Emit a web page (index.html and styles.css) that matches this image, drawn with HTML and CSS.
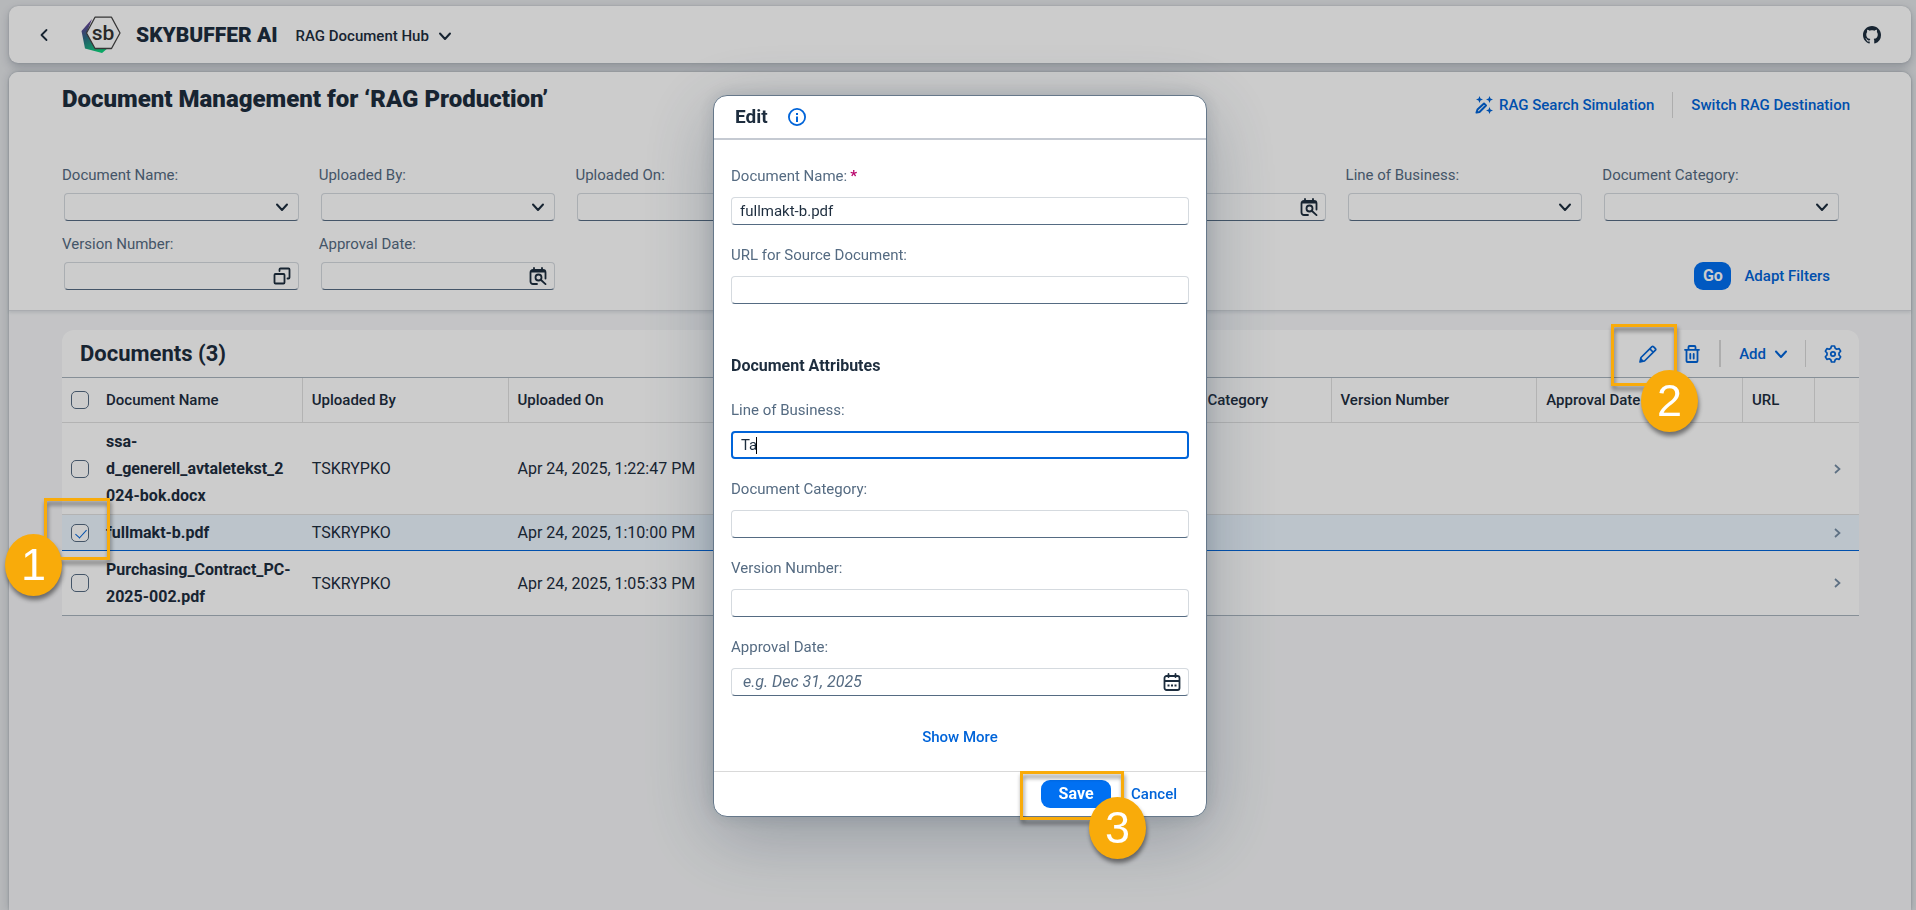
FILE: index.html
```html
<!DOCTYPE html>
<html lang="en">
<head>
<meta charset="utf-8">
<title>RAG Document Hub</title>
<link rel="stylesheet" href="styles.css">
</head>
<body>
<svg class="defs" aria-hidden="true">
  <symbol id="i-down" viewBox="0 0 18 18"><path d="M4 6.500 9 12l5-5.500" fill="none" stroke="currentColor" stroke-width="2" stroke-linecap="round" stroke-linejoin="round"/></symbol>
  <symbol id="i-left" viewBox="0 0 18 18"><path d="M11.500 4 6.500 9l5 5" fill="none" stroke="currentColor" stroke-width="1.800" stroke-linecap="round" stroke-linejoin="round"/></symbol>
  <symbol id="i-right" viewBox="0 0 18 18"><path d="M7 5l4.500 4L7 13" fill="none" stroke="currentColor" stroke-width="1.700"/></symbol>
  <symbol id="i-calsearch" viewBox="0 0 18 18"><g fill="none" stroke="currentColor" stroke-width="1.800" stroke-linecap="round" stroke-linejoin="round"><path d="M8 17H4a2.500 2.500 0 0 1-2.500-2.500V5.500A2.500 2.500 0 0 1 4 3h10a2.500 2.500 0 0 1 2.500 2.500v6M2 4.500h14M5 1v3M13 1v3"/><circle cx="9.500" cy="10.500" r="3"/><path d="M12 13l4.500 4.200"/></g></symbol>
  <symbol id="i-cal" viewBox="0 0 18 18"><g fill="none" stroke="currentColor" stroke-width="1.800" stroke-linecap="round"><rect x="1.500" y="3" width="15" height="14" rx="2"/><path d="M5.500 1v3M12.500 1v3M2 8h14"/></g><path d="M4.500 11.500h2v2h-2zM8 11.500h2v2H8zM11.500 11.500h2v2h-2z" fill="currentColor"/></symbol>
  <symbol id="i-copy" viewBox="0 0 18 18"><g fill="none" stroke="currentColor" stroke-width="1.800" stroke-linejoin="round" stroke-linecap="round"><rect x="1.500" y="7" width="10" height="9.500" rx="1"/><path d="M6.500 4V2.500a1 1 0 0 1 1-1h8a1 1 0 0 1 1 1v8a1 1 0 0 1-1 1H14.500"/></g></symbol>
</svg>

<header class="shellbar">
  <button class="plain back" aria-label="Back"><svg class="icon"><use href="#i-left"/></svg></button>
  <svg class="logo" viewBox="0 0 40 38" role="img" aria-label="Skybuffer logo">
    <defs><linearGradient id="lg" x1="0" y1="0" x2="0.500" y2="1"><stop offset="0.150" stop-color="#6a3d97"/><stop offset="0.500" stop-color="#2f6d86"/><stop offset="1" stop-color="#0fd17f"/></linearGradient></defs>
    <path d="M11 3 .5 15l3.500 17.500L21 37l6-5L15 30 6 16z" fill="url(#lg)"/>
    <path d="M14 1.200h16.500L39 17 30.500 32.500H14L5.500 17z" fill="#fff" stroke="#444" stroke-width="1.300" stroke-linejoin="round"/>
    <text x="22" y="24" text-anchor="middle" class="logo-text">sb</text>
  </svg>
  <span class="brand">SKYBUFFER AI</span>
  <button class="plain app-title">RAG Document Hub <svg class="icon"><use href="#i-down"/></svg></button>
  <a class="github" href="#" aria-label="GitHub"><svg viewBox="0 0 16 16"><path fill="currentColor" d="M8 0C3.580 0 0 3.580 0 8c0 3.540 2.290 6.530 5.470 7.590.4.070.55-.17.55-.38 0-.19-.01-.82-.01-1.490-2.010.37-2.530-.49-2.690-.94-.09-.23-.48-.94-.82-1.130-.28-.15-.68-.52-.01-.53.63-.01 1.080.58 1.230.82.72 1.210 1.870.87 2.330.66.07-.52.28-.87.51-1.070-1.780-.2-3.640-.89-3.640-3.950 0-.87.31-1.590.82-2.150-.08-.2-.36-1.020.08-2.120 0 0 .67-.21 2.200.82.64-.18 1.320-.27 2-.27s1.360.09 2 .27c1.530-1.040 2.200-.82 2.200-.82.44 1.100.16 1.920.08 2.120.51.56.82 1.270.82 2.150 0 3.070-1.870 3.750-3.650 3.950.29.25.54.73.54 1.480 0 1.070-.01 1.930-.01 2.200 0 .21.15.46.55.38A8.010 8.010 0 0 0 16 8c0-4.420-3.580-8-8-8z"/></svg></a>
</header>

<main class="page">
  <section class="page-head">
    <div class="title-row">
      <h1>Document Management for ‘RAG Production’</h1>
      <nav class="actions">
        <button class="plain link-btn"><svg class="icon" viewBox="0 0 18 18"><path d="M1.500 16.500l1-3L9 7.500l2 2-6.500 6.500z" fill="none" stroke="currentColor" stroke-width="2" stroke-linejoin="round"/><path d="M4.500 0l1 2.500L8 3.500l-2.500 1-1 2.500-1-2.500L1 3.500l2.500-1zM14.500 0l1 2.500L18 3.500l-2.500 1-1 2.500-1-2.500-2.500-1 2.500-1zM14.500 11l1 2.500 2.500 1-2.500 1-1 2.500-1-2.500-2.500-1 2.500-1z" fill="currentColor"/></svg> RAG Search Simulation</button>
        <button class="plain link-btn split">Switch RAG Destination</button>
      </nav>
    </div>
    <form class="filters">
      <div class="filter"><label for="f1">Document Name:</label><div class="control"><select id="f1"></select><svg class="icon"><use href="#i-down"/></svg></div></div>
      <div class="filter"><label for="f2">Uploaded By:</label><div class="control"><select id="f2"></select><svg class="icon"><use href="#i-down"/></svg></div></div>
      <div class="filter"><label for="f3">Uploaded On:</label><div class="control"><input id="f3" type="text"></div></div>
      <div class="filter"></div>
      <div class="filter"><div class="control"><input type="text" aria-label="Date"><svg class="icon"><use href="#i-calsearch"/></svg></div></div>
      <div class="filter"><label for="f6">Line of Business:</label><div class="control"><select id="f6"></select><svg class="icon"><use href="#i-down"/></svg></div></div>
      <div class="filter"><label for="f7">Document Category:</label><div class="control"><select id="f7"></select><svg class="icon"><use href="#i-down"/></svg></div></div>
      <div class="filter"><label for="f8">Version Number:</label><div class="control"><input id="f8" type="text"><svg class="icon"><use href="#i-copy"/></svg></div></div>
      <div class="filter"><label for="f9">Approval Date:</label><div class="control"><input id="f9" type="text"><svg class="icon"><use href="#i-calsearch"/></svg></div></div>
      <div class="filter-actions"><button type="button" class="primary go">Go</button><button type="button" class="plain link-btn">Adapt Filters</button></div>
    </form>
  </section>

  <section class="documents">
    <div class="toolbar">
      <h2>Documents (3)</h2>
      <button class="plain tool" aria-label="Edit"><svg class="icon" viewBox="0 0 18 18"><g fill="none" stroke="currentColor" stroke-width="1.700" stroke-linejoin="round"><path d="M1 17l1-4.500L13 1.700a1 1 0 0 1 1.400 0l2 2a1 1 0 0 1 0 1.400L5.500 16z"/><path d="M11 4l3 3"/></g><path d="M1 17l1-4 3 3z" fill="currentColor"/></svg></button>
      <button class="plain tool" aria-label="Delete"><svg class="icon" viewBox="0 0 18 18"><g fill="none" stroke="currentColor" stroke-width="1.800" stroke-linejoin="round" stroke-linecap="round"><path d="M2 4.800h14M3.500 5v11a1 1 0 0 0 1 1h9a1 1 0 0 0 1-1V5M5.500 4.500V2a1 1 0 0 1 1-1h5a1 1 0 0 1 1 1v2.500"/><path d="M7.300 9v4.500M10.700 9v4.500"/></g></svg></button>
      <span class="rule thick"></span>
      <button class="plain add">Add <svg class="icon"><use href="#i-down"/></svg></button>
      <span class="rule"></span>
      <button class="plain tool" aria-label="Settings"><svg class="icon" viewBox="0 0 18 18"><path d="M7.500 1h3l.7 2.300 1.500.9 2.400-.6 1.500 2.600L15 8v2l1.600 1.800-1.500 2.600-2.400-.6-1.500.9-.7 2.300h-3l-.7-2.300-1.500-.9-2.400.6-1.500-2.600L3 10V8L1.400 6.200l1.500-2.600 2.400.6 1.500-.9z" fill="none" stroke="currentColor" stroke-width="1.700" stroke-linejoin="round"/><circle cx="9" cy="9" r="2.200" fill="none" stroke="currentColor" stroke-width="1.700"/></svg></button>
    </div>
    <table>
      <colgroup><col class="c-sel"><col><col><col><col><col><col><col><col><col class="c-url"><col class="c-nav"></colgroup>
      <thead><tr>
        <th class="sel"><input type="checkbox" aria-label="Select all"></th><th>Document Name</th><th>Uploaded By</th><th>Uploaded On</th><th></th><th></th><th>Document Category</th><th>Version Number</th><th>Approval Date</th><th>URL</th><th></th>
      </tr></thead>
      <tbody>
        <tr><td class="sel"><input type="checkbox" aria-label="Select ssa-d_generell_avtaletekst_2024-bok.docx"></td><td class="name">ssa-<br>d_generell_avtaletekst_2<br>024-bok.docx</td><td>TSKRYPKO</td><td>Apr 24, 2025, 1:22:47 PM</td><td></td><td></td><td></td><td></td><td></td><td></td><td class="nav"><svg class="icon"><use href="#i-right"/></svg></td></tr>
        <tr class="selected"><td class="sel"><input type="checkbox" checked aria-label="Select fullmakt-b.pdf"></td><td class="name">fullmakt-b.pdf</td><td>TSKRYPKO</td><td>Apr 24, 2025, 1:10:00 PM</td><td></td><td></td><td></td><td></td><td></td><td></td><td class="nav"><svg class="icon"><use href="#i-right"/></svg></td></tr>
        <tr><td class="sel"><input type="checkbox" aria-label="Select Purchasing_Contract_PC-2025-002.pdf"></td><td class="name">Purchasing_Contract_PC-<br>2025-002.pdf</td><td>TSKRYPKO</td><td>Apr 24, 2025, 1:05:33 PM</td><td></td><td></td><td></td><td></td><td></td><td></td><td class="nav"><svg class="icon"><use href="#i-right"/></svg></td></tr>
      </tbody>
    </table>
  </section>
</main>

<div class="overlay">
  <div class="dialog" role="dialog" aria-modal="true" aria-labelledby="dlg-title">
    <header class="dialog-head">
      <h2 id="dlg-title">Edit</h2>
      <button class="plain info" aria-label="Information"><svg class="icon" viewBox="0 0 18 18"><circle cx="9" cy="9" r="8.100" fill="none" stroke="currentColor" stroke-width="1.800"/><path d="M8 5h2v2H8zM8 8.500h2V14H8z" fill="currentColor"/></svg></button>
    </header>
    <form class="dialog-body">
      <div class="field"><label for="d1">Document Name:<span class="required">*</span></label><div class="control"><input id="d1" type="text" value="fullmakt-b.pdf"></div></div>
      <div class="field"><label for="d2">URL for Source Document:</label><div class="control"><input id="d2" type="text"></div></div>
      <h3>Document Attributes</h3>
      <div class="field"><label for="d3">Line of Business:</label><div class="control focused"><input id="d3" type="text" value="Ta"><span class="caret"></span></div></div>
      <div class="field"><label for="d4">Document Category:</label><div class="control"><input id="d4" type="text"></div></div>
      <div class="field"><label for="d5">Version Number:</label><div class="control"><input id="d5" type="text"></div></div>
      <div class="field"><label for="d6">Approval Date:</label><div class="control"><input id="d6" class="date" type="text" placeholder="e.g. Dec 31, 2025"><svg class="icon"><use href="#i-cal"/></svg></div></div>
      <button type="button" class="plain link-btn more">Show More</button>
    </form>
    <footer class="dialog-foot">
      <button class="primary save">Save</button>
      <button class="plain link-btn">Cancel</button>
    </footer>
    <div class="callout callout-3"><span>3</span></div>
  </div>
</div>
<div class="callout callout-1"><span>1</span></div>
<div class="callout callout-2"><span>2</span></div>
</body>
</html>
```
FILE: styles.css
```css
* { box-sizing: border-box; }
body {
  margin: 0;
  min-height: 100vh;
  padding: 6px 5px 0 9px;
  display: flex;
  flex-direction: column;
  gap: 9px;
  overflow: hidden;
  position: relative;
  background: #e4e6e9;
  color: #1d2d3e;
  font: 16px/22px Roboto, "Liberation Sans", sans-serif;
}
h1, h2, h3 { margin: 0; font-weight: 700; }
button, input, select { font: inherit; color: inherit; }
.defs { position: absolute; width: 0; height: 0; }
.icon { width: 18px; height: 18px; display: block; flex: none; }
.plain { border: 0; background: none; padding: 0; display: flex; align-items: center; }
.link-btn { color: #0064d9; font-weight: 500; font-size: 15px; gap: 6px; }
.primary { border: 0; border-radius: 9px; background: #0070f2; color: #fff; font-weight: 700; height: 28px; padding: 0; }

.shellbar {
  display: flex;
  align-items: center;
  height: 57px;
  padding: 0 30px 0 26px;
  border-radius: 9px;
  background: #fff;
  box-shadow: 0 0 2px rgba(34, 53, 72, .2), 0 4px 9px rgba(34, 53, 72, .25);
}
.back { margin-right: 28px; }
.logo { width: 40px; height: 38px; margin-right: 15px; }
.logo-text { font: 500 21px Roboto, sans-serif; fill: #333; }
.brand { font-size: 21px; font-weight: 900; margin-right: 18px; }
.app-title { gap: 7px; font-weight: 500; font-size: 15px; padding-top: 2px; }
.github { margin-left: auto; color: inherit; }
.github svg { width: 18px; height: 18px; display: block; }

.page {
  flex: 1;
  border-radius: 9px 9px 0 0;
  background: #f5f6f8;
  box-shadow: 0 0 2px rgba(34, 53, 72, .3), 0 0 9px rgba(34, 53, 72, .2);
}
.page-head {
  padding: 13px 52px 20px 53px;
  border-radius: 9px 9px 0 0;
  border-bottom: 1px solid #d5d8dc;
  background: #fff;
  box-shadow: 0 2px 3px rgba(34, 53, 72, .1);
}
.title-row { display: flex; justify-content: space-between; height: 79px; }
.title-row h1 { font-size: 24px; line-height: 28px; font-weight: 900; }
.actions { display: flex; align-items: center; height: 26px; margin: 7px 9px 0 0; }
.actions .split { margin-left: 18px; padding-left: 18px; height: 26px; border-left: 1px solid #d9d9d9; }

.filters { display: grid; grid-template-columns: repeat(7, 1fr); row-gap: 12px; }
.filter { padding: 0 20px 0 0; display: flex; flex-direction: column; justify-content: flex-end; min-height: 57px; }
.filter label { color: #556b82; margin-bottom: 7px; font-size: 15px; }
.filter .control { margin-left: 2px; }
.filter-actions { grid-column: 6 / -1; display: flex; justify-content: flex-end; align-items: flex-end; gap: 13px; padding-right: 29px; }
.filter-actions .link-btn { height: 28px; }
.go { width: 37px; }
.control { position: relative; }
.control input, .control select {
  display: block;
  width: 100%;
  height: 28px;
  padding: 0 8px;
  appearance: none;
  border: 1px solid #d5dadf;
  border-bottom-color: #556b82;
  border-radius: 4px;
  background: #fff;
  font-size: 15px;
  outline: 0;
}
.control .icon { position: absolute; right: 8px; top: 5px; pointer-events: none; }

.documents { margin: 19px 52px 0 53px; border-radius: 12px 12px 0 0; background: #fff; }
.toolbar { display: flex; align-items: center; height: 47px; padding: 0 17px 0 18px; color: #0064d9; }
.toolbar h2 { margin-right: auto; font-size: 22px; color: #1d2d3e; }
.tool + .tool { margin-left: 26px; }
.rule { width: 1px; height: 27px; background: #d9d9d9; margin: 0 18px; }
.rule.thick { width: 2px; }
.add { gap: 6px; font-weight: 500; font-size: 15px; }
.add + .rule { margin-left: 15px; }
table { width: 100%; border-collapse: separate; border-spacing: 0; table-layout: fixed; border-top: 1px solid #a8b3bd; border-bottom: 1px solid #a8b3bd; }
.c-sel { width: 35px; }
.c-url { width: 72px; }
.c-nav { width: 44px; }
th, td { text-align: left; padding: 5px 9px; border-bottom: 1px solid #e0e0e0; line-height: 27px; white-space: nowrap; }
th { font-weight: 500; font-size: 15px; height: 45px; border-right: 1px solid #e0e0e0; }
th:first-child, th:last-child { border-right: 0; }
tbody tr:last-child td { border-bottom: 0; }
.name { font-weight: 700; }
th.sel, td.sel { padding-right: 0; }
td.nav { padding-right: 0; padding-left: 13px; color: #758ca4; }
.selected td { padding-top: 4px; padding-bottom: 4px; background: #ebf5fe; border-bottom-color: #0064d9; }
.sel input {
  appearance: none;
  display: block;
  width: 18px;
  height: 18px;
  margin: 0;
  border: 1px solid #556b82;
  border-radius: 5px;
  background: #fff;
  position: relative;
}
.sel input:checked::after {
  content: "";
  position: absolute;
  left: 6px;
  top: 2px;
  width: 5px;
  height: 10px;
  border: solid #0064d9;
  border-width: 0 1px 1px 0;
  transform: rotate(42deg);
}

.overlay {
  position: fixed;
  inset: 0;
  display: flex;
  align-items: center;
  justify-content: center;
  padding: 2px 0 0 4px;
  background: rgba(0, 0, 0, .2);
}
.dialog {
  position: relative;
  width: 494px;
  border: 1px solid #66788a;
  border-radius: 14px;
  background: #fff;
  box-shadow: 0 18px 72px rgba(34, 53, 72, .3), 0 0 18px rgba(34, 53, 72, .15);
}
.dialog-head { display: flex; align-items: center; gap: 20px; height: 44px; padding: 0 21px; border-bottom: 2px solid #c5cad2; }
.dialog-head h2 { font-size: 19px; }
.info { color: #0064d9; }
.dialog-body { display: flex; flex-direction: column; padding: 25px 17px 23px; }
.field { margin-bottom: 19px; }
.field label { display: block; color: #556b82; font-size: 15px; margin-bottom: 10px; }
.required { color: #ba066c; font-weight: 700; margin-left: 3px; }
.dialog-body h3 { font-size: 16px; line-height: 22px; margin: 32px 0 22px; }
.focused input { border: 2px solid #0064d9; }
.caret { position: absolute; left: 25px; top: 6px; width: 1px; height: 17px; background: #000; }
.field input::placeholder { color: #556b82; opacity: 1; font-style: italic; font-size: 16px; }
.control input.date { padding: 0 11px; }
.more { align-self: center; margin-top: 11px; }
.dialog-foot { display: flex; justify-content: flex-end; align-items: center; gap: 20px; height: 45px; padding: 0 29px 0 0; border-top: 1px solid #d9d9d9; }
.save { width: 70px; }

.callout {
  position: absolute;
  width: 66px;
  height: 62px;
  border: 3px solid #f9ab0a;
  filter: drop-shadow(1px 4px 2px rgba(0, 0, 0, .45));
}
.callout span {
  position: absolute;
  width: 57px;
  height: 62px;
  border-radius: 50%;
  background: #f9ab0a;
  color: #fff;
  font: 45px/62px "Liberation Sans", sans-serif;
  text-align: center;
}
.callout-1 { left: 44px; top: 498px; }
.callout-1 span { left: -42px; top: 33px; }
.callout-2 { right: 239px; top: 324px; }
.callout-2 span { left: 27px; top: 43px; }
.callout-3 { width: 104px; height: 49px; right: 82px; bottom: -4px; }
.callout-3 span { left: 66px; top: 23px; }
```
